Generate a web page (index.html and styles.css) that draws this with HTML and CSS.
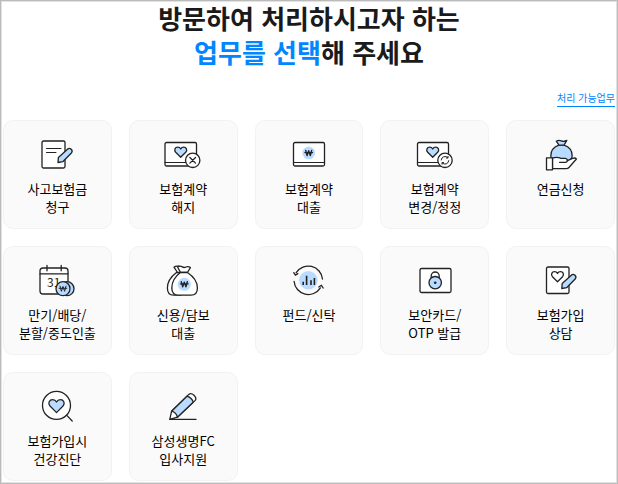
FILE: index.html
```html
<!DOCTYPE html>
<html lang="ko">

<head>
    <meta charset="UTF-8">
    <meta name="viewport" content="width=device-width, initial-scale=1.0">
    <title>방문 업무 선택</title>
    <link rel="stylesheet" href="styles.css">
</head>

<body>
    <!-- shared icon shapes -->
    <svg class="defs" width="0" height="0" aria-hidden="true">
        <defs>
            <path id="heart" d="M0 5.2L-5 .2C-7 -2-5.6 -4.8-3 -4.8C-1.6 -4.8-.5 -4 0 -3C.5 -4 1.6 -4.8 3 -4.8C5.6 -4.8 7 -2 5 .2Z" />
            <path id="pen" d="M0 0L.4 -4.9L9.8 -13.6Q11.5 -14.8 13.2 -13.2Q14.9 -11.4 13.6 -9.8L4.8 -.8Z" />
            <path id="won" d="M-3 -2.6L-1.6 2.6L0 -2.2L1.6 2.6L3 -2.6M-3.8 -.4H3.8" />
        </defs>
    </svg>
    <div class="wrap">
        <h1 class="title">방문하여 처리하시고자 하는<br><em>업무를 선택</em>해 주세요</h1>
        <div class="more">
            <a href="#">처리 가능업무</a>
        </div>
        <ul class="menu">
            <li>
                <a href="#">
                    <svg class="icon" viewBox="0 0 44 36" aria-hidden="true">
                        <rect class="w" x="7" y="5" width="23" height="27" rx="1.5" />
                        <path class="thin" d="M11.5 12.5H26M11.5 16.5H21" />
                        <use class="b" href="#pen" x="23" y="26.5" />
                    </svg>
                    <span>사고보험금<br>청구</span>
                </a>
            </li>
            <li>
                <a href="#">
                    <svg class="icon" viewBox="0 0 44 36" aria-hidden="true">
                        <rect class="w" x="4" y="6.5" width="31.5" height="23.5" rx="1.5" />
                        <path class="thin" d="M4 26.5H35" />
                        <use class="b" href="#heart" x="19.7" y="16" />
                        <circle class="w" cx="31.7" cy="24.3" r="7.2" />
                        <path d="M28.9 21.5L34.5 27.1M34.5 21.5L28.9 27.1" />
                    </svg>
                    <span>보험계약<br>해지</span>
                </a>
            </li>
            <li>
                <a href="#">
                    <svg class="icon" viewBox="0 0 44 36" aria-hidden="true">
                        <rect class="w" x="6.5" y="6.5" width="31" height="23.5" rx="1.5" />
                        <path class="thin" d="M6.5 26.5H37.5" />
                        <circle class="f" cx="21.7" cy="17" r="6.3" />
                        <use class="bold" href="#won" x="21.7" y="17" />
                    </svg>
                    <span>보험계약<br>대출</span>
                </a>
            </li>
            <li>
                <a href="#">
                    <svg class="icon" viewBox="0 0 44 36" aria-hidden="true">
                        <rect class="w" x="4.5" y="6.5" width="31" height="23.5" rx="1.5" />
                        <path class="thin" d="M4.5 26.5H35" />
                        <use class="b" href="#heart" x="19.7" y="16" />
                        <circle class="w" cx="32" cy="24.3" r="7.2" />
                        <path class="thin" d="M28.2 24A3.9 3.9 0 0 1 34.8 21.6M35.8 24.6A3.9 3.9 0 0 1 29.2 27M35 20.4V22H33.4M29 28.2V26.6H30.6" />
                    </svg>
                    <span>보험계약<br>변경/정정</span>
                </a>
            </li>
            <li>
                <a href="#">
                    <svg class="icon" viewBox="0 0 44 36" aria-hidden="true">
                        <path class="b" d="M20 9.2C14.5 11 11.8 15.5 11.8 20C11.8 23.5 15 26 22.5 26C30 26 33.2 23.5 33.2 20C33.2 15.5 30.5 11 25 9.2Z" />
                        <path class="b" d="M20 9.2L17.3 5.2Q19.5 3.6 22.3 4.8Q25 6 27.8 4.4L25 9.2Z" />
                        <path class="w" d="M13.5 22.2C16.5 21 19.5 21.2 22 22.4H26.5Q28.4 22.8 28.4 24.6L33.6 22.4Q36.4 21.4 37.4 23L30.2 31.2Q29 32.6 27 32.6H13.5Z" />
                        <path d="M20.5 26.3H26.4Q28.4 26.2 28.4 24.6" />
                        <rect class="w" x="7.5" y="21.8" width="6" height="12" />
                    </svg>
                    <span>연금신청</span>
                </a>
            </li>
            <li>
                <a href="#">
                    <svg class="icon" viewBox="0 0 44 36" aria-hidden="true">
                        <rect class="w" x="5" y="6" width="28" height="26" rx="3" />
                        <path d="M5 11.8H33M12 3.5V8.8M26.2 3.5V8.8" />
                        <text class="day" x="12" y="25">31</text>
                        <circle class="b" cx="32" cy="26.7" r="7" />
                        <circle class="b" cx="28" cy="26.7" r="7" />
                        <use class="thin" href="#won" x="28" y="26.7" />
                    </svg>
                    <span>만기/배당/<br>분할/중도인출</span>
                </a>
            </li>
            <li>
                <a href="#">
                    <svg class="icon" viewBox="0 0 44 36" aria-hidden="true">
                        <path class="w" d="M15.5 10.5C9.5 15 6.4 20.5 6.4 26C6.4 31 8.5 33.2 12.5 33.2H20V10.5Z" />
                        <path class="w" d="M16.5 10.5L13 5.2Q14.5 3.6 18 4.2L20 10.5Z" />
                        <path class="w" d="M19.5 10.5L16.6 5Q19 3.4 21.3 4.9Q23 6 25 5Q27.4 4 29.4 5.6L26.4 10.5Z" />
                        <path class="w" d="M19.5 10.5C14 14.5 10.8 20 10.8 26C10.8 31 13 33.2 17.5 33.2H30C34.4 33.2 36.4 30.6 36.4 26C36.4 20 32.5 14.5 26.4 10.5Z" />
                        <circle class="f" cx="23.3" cy="22.3" r="6.5" />
                        <use class="bold" href="#won" x="23.3" y="22.3" />
                    </svg>
                    <span>신용/담보<br>대출</span>
                </a>
            </li>
            <li>
                <a href="#">
                    <svg class="icon" viewBox="0 0 44 36" aria-hidden="true">
                        <circle class="f" cx="21.3" cy="18.3" r="9.2" />
                        <path d="M9.2 10.7A14.3 14.3 0 0 1 35.5 17M33.4 25.9A14.3 14.3 0 0 1 7.1 19.5" />
                        <path d="M6.8 10.6L8.4 13.2L10.8 11.6M36.2 26L34.4 23.3L31.8 25" />
                        <path class="bars" d="M16.2 23V19.7M19.6 23V13.7M24 23V18.3M27.4 23V16" />
                    </svg>
                    <span>펀드/신탁</span>
                </a>
            </li>
            <li>
                <a href="#">
                    <svg class="icon" viewBox="0 0 44 36" aria-hidden="true">
                        <rect class="w" x="7" y="6.5" width="31" height="24" rx="1.5" />
                        <path d="M18.2 16V14A4 4 0 0 1 26.2 14V16" />
                        <circle class="b" cx="22.2" cy="20.7" r="6.2" />
                        <circle class="dot" cx="22.2" cy="20.7" r="1.3" />
                    </svg>
                    <span>보안카드/<br>OTP 발급</span>
                </a>
            </li>
            <li>
                <a href="#">
                    <svg class="icon" viewBox="0 0 44 36" aria-hidden="true">
                        <rect class="w" x="7.5" y="5" width="22.5" height="26.5" rx="1.5" />
                        <use class="w" href="#heart" x="18.5" y="14.5" />
                        <use class="b" href="#pen" x="22.8" y="26.5" />
                    </svg>
                    <span>보험가입<br>상담</span>
                </a>
            </li>
            <li>
                <a href="#">
                    <svg class="icon" viewBox="0 0 44 36" aria-hidden="true">
                        <circle class="w" cx="21.5" cy="17.4" r="14" />
                        <path d="M31.8 27.4L37.2 33" />
                        <path class="b" d="M21.5 24.6L15 18C12.5 15 14.4 11.6 17.6 11.6C19.4 11.6 20.8 12.6 21.5 14C22.2 12.6 23.6 11.6 25.4 11.6C28.6 11.6 30.5 15 28 18Z" />
                    </svg>
                    <span>보험가입시<br>건강진단</span>
                </a>
            </li>
            <li>
                <a href="#">
                    <svg class="icon" viewBox="0 0 44 36" aria-hidden="true">
                        <path class="w" d="M8.8 31.3L10.6 23.2L27.8 6.4Q30 4.6 33 7.2Q36 10.2 34.2 12.4L16.4 29.2Z" />
                        <path class="b" d="M10.6 23.2L26 8.2Q31 9.8 32.2 14.2L16.4 29.2Q15.4 24.6 10.6 23.2Z" />
                        <path d="M8.8 31.4H35" />
                    </svg>
                    <span>삼성생명FC<br>입사지원</span>
                </a>
            </li>
        </ul>
    </div>
</body>

</html>
```
FILE: styles.css
```css
* {
    margin: 0;
    padding: 0;
    box-sizing: border-box;
}

body {
    background-color: #fff;
    color: #000;
    font-family: "Noto Sans CJK KR", "Noto Sans", sans-serif;
}

ul {
    list-style: none;
}

a {
    color: inherit;
    text-decoration: none;
}

.defs {
    display: block;
}

.wrap {
    min-height: 100vh;
    padding: 0 2px 2px;
    border: 1px solid #bbb;
    box-shadow: inset 0 0 0 1px #e2e2e2;
}

.title {
    color: #1a1a1a;
    font-size: 26px;
    font-weight: 700;
    line-height: 34px;
    text-align: center;
}

.title em {
    color: #0086ff;
    font-style: normal;
}

.more {
    display: flex;
    justify-content: flex-end;
    margin: 21px 0 13px;
}

.more a {
    border-bottom: 1px solid #0086ff;
    color: #0086ff;
    font-size: 10px;
    line-height: 16px;
}

.menu {
    display: grid;
    grid-template-columns: repeat(5, 1fr);
    gap: 17px;
}

.menu a {
    display: flex;
    flex-direction: column;
    align-items: center;
    gap: 8px;
    height: 100%;
    min-height: 109px;
    padding: 15px 0 12px;
    border: 1px solid #f2f2f2;
    border-radius: 10px;
    background-color: #fafafa;
    font-size: 13px;
    line-height: 18px;
    text-align: center;
}

/* icons */
.icon {
    width: 44px;
    height: 36px;
    fill: none;
    stroke: #222;
    stroke-width: 1.3;
    stroke-linecap: round;
    stroke-linejoin: round;
}

.icon .w {
    fill: #fff;
}

.icon .b {
    fill: #b9dbff;
}

.icon .f {
    fill: #b9dbff;
    stroke: none;
}

.icon .dot {
    fill: #222;
    stroke: none;
}

.icon .thin {
    stroke-width: 1;
}

.icon .bold {
    stroke-width: 1.4;
}

.icon .bars {
    stroke-width: 1.6;
    stroke-linecap: butt;
}

.icon .day {
    fill: #222;
    stroke: none;
    font-size: 12px;
}
```
